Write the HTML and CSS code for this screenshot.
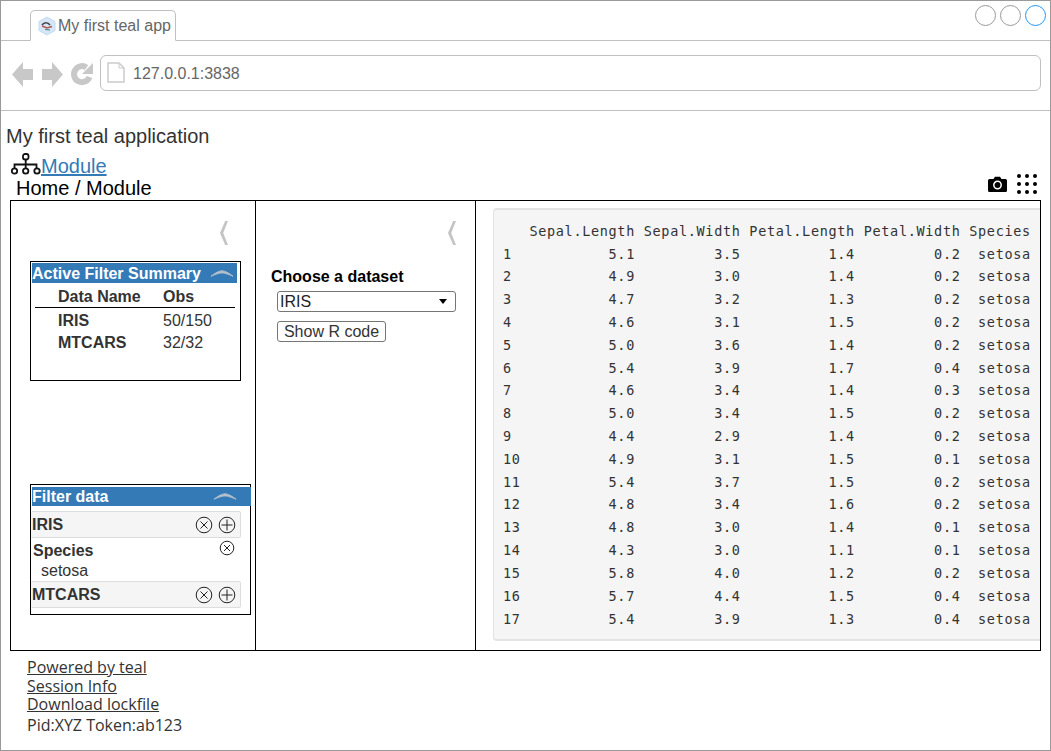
FILE: index.html
```html
<!DOCTYPE html>
<html>
<head>
  <title>My first teal app</title>
  <link rel="stylesheet" href="styles.css">
</head>
<body>
  <div class="window">
    <div class="tabstrip">
      <div class="tab">
        <svg class="favicon" width="18" height="20" viewBox="0 0 18 20">
          <polygon points="9,1 17,5.5 17,14.5 9,19 1,14.5 1,5.5" fill="#d6e6f7" stroke="#c3daf2"/>
          <path d="M4 9c2-3 6-3 8 0" fill="none" stroke="#444" stroke-width="1.6"/>
          <path d="M4 10l5 2 5-1.5" fill="none" stroke="#b5544c" stroke-width="1.4"/>
          <path d="M7 13.5l5 .5" fill="none" stroke="#2f8f7f" stroke-width="1.2"/>
        </svg>
        <span>My first teal app</span>
      </div>
      <div class="window-btns">
        <span class="circle"></span>
        <span class="circle"></span>
        <span class="circle active"></span>
      </div>
    </div>

    <div class="navbar">
      <svg class="nav-icons" width="85" height="30" viewBox="0 0 85 30">
        <path d="M2 16.5L13 4v7h10v11H13v7z" fill="#c8c8c8"/>
        <path d="M53 16.5L42 4v7H32v11h10v7z" fill="#c8c8c8"/>
        <path d="M79.500 19A8 8 0 1 1 76.500 9.500" fill="none" stroke="#c8c8c8" stroke-width="6"/>
        <path d="M83 5v11H72z" fill="#c8c8c8"/>
      </svg>
      <div class="address">
        <svg width="18" height="21" viewBox="0 0 18 21">
          <path d="M1 1h11l5 5v14H1z" fill="#fff" stroke="#ccc" stroke-width="1.5"/>
          <path d="M12 1v5h5" fill="none" stroke="#ccc"/>
        </svg>
        <span class="url">127.0.0.1:3838</span>
      </div>
    </div>

    <div class="app-title">My first teal application</div>
    <div class="module-tab">
      <svg width="30" height="22" viewBox="0 0 30 22">
        <g fill="none" stroke="#111" stroke-width="1.8">
          <rect x="12" y="1" width="5.5" height="5.5" rx="2"/>
          <path d="M14.700 6.500v5M3.500 15v-3.500h22V15M14.700 11.500V15"/>
          <circle cx="3.500" cy="18" r="2.700"/>
          <circle cx="14.700" cy="18" r="2.700"/>
          <circle cx="26" cy="18" r="2.700"/>
        </g>
      </svg>
      <a href="#">Module</a>
    </div>

    <div class="crumbs">
      <span>Home / Module</span>
      <div class="crumb-tools">
        <svg width="19" height="16" viewBox="0 0 19 16">
          <path d="M1.500 3H5.500L7 .7h5L13.500 3h4A1.500 1.500 0 0 1 19 4.500v10a1.500 1.500 0 0 1-1.500 1.500h-16A1.500 1.500 0 0 1 0 14.500v-10A1.500 1.500 0 0 1 1.500 3z" fill="#000"/>
          <circle cx="9.500" cy="9" r="3.700" fill="none" stroke="#fff" stroke-width="1.5"/>
        </svg>
        <div class="dots">
          <i></i><i></i><i></i><i></i><i></i><i></i><i></i><i></i><i></i>
        </div>
      </div>
    </div>

    <div class="main">
      <div class="left-col">
        <div class="chevron-row"><span class="chevron"></span></div>

        <div class="summary">
          <div class="blue-head">
            <span>Active Filter Summary</span>
            <svg width="24" height="9" viewBox="0 0 26 9"><path d="M1 7.500C8 2 12 1.500 13 1.500s5 .5 12 6C18 4.500 15 4 13 4S8 4.500 1 7.500z" fill="#b4c0cc" stroke="#b4c0cc"/></svg>
          </div>
          <table class="summary-table">
            <thead>
              <tr><th>Data Name</th><th>Obs</th></tr>
            </thead>
            <tbody>
              <tr><td class="name">IRIS</td><td>50/150</td></tr>
              <tr><td class="name">MTCARS</td><td>32/32</td></tr>
            </tbody>
          </table>
        </div>

        <div class="filters">
          <div class="blue-head">
            <span>Filter data</span>
            <svg width="24" height="9" viewBox="0 0 26 9"><path d="M1 7.500C8 2 12 1.500 13 1.500s5 .5 12 6C18 4.500 15 4 13 4S8 4.500 1 7.500z" fill="#b4c0cc" stroke="#b4c0cc"/></svg>
          </div>
          <div class="data-row first">
            <b>IRIS</b>
            <div class="row-icons">
              <svg width="18" height="18" viewBox="0 0 18 18"><circle cx="9" cy="9" r="7.8"/><path d="M5.500 5.500l7 7M12.500 5.500l-7 7"/></svg>
              <svg width="18" height="18" viewBox="0 0 18 18"><circle cx="9" cy="9" r="7.8"/><path d="M9 3.500v11M3.500 9h11"/></svg>
            </div>
          </div>
          <div class="species">
            <div class="species-head">
              <b>Species</b>
              <svg width="16" height="16" viewBox="0 0 16 16"><circle cx="8" cy="8" r="6.8"/><path d="M5 5l6 6M11 5l-6 6"/></svg>
            </div>
            <div class="species-val">setosa</div>
          </div>
          <div class="data-row">
            <b>MTCARS</b>
            <div class="row-icons">
              <svg width="18" height="18" viewBox="0 0 18 18"><circle cx="9" cy="9" r="7.8"/><path d="M5.500 5.500l7 7M12.500 5.500l-7 7"/></svg>
              <svg width="18" height="18" viewBox="0 0 18 18"><circle cx="9" cy="9" r="7.8"/><path d="M9 3.500v11M3.500 9h11"/></svg>
            </div>
          </div>
        </div>
      </div>

      <div class="mid-col">
        <div class="chevron-row"><span class="chevron"></span></div>
        <div class="choose">Choose a dataset</div>
        <div class="fake-select">
          <span>IRIS</span>
          <span class="caret"></span>
        </div>
        <button class="code-btn">Show R code</button>
      </div>

      <div class="right-col">
<pre class="output">   Sepal.Length Sepal.Width Petal.Length Petal.Width Species
1           5.1         3.5          1.4         0.2  setosa
2           4.9         3.0          1.4         0.2  setosa
3           4.7         3.2          1.3         0.2  setosa
4           4.6         3.1          1.5         0.2  setosa
5           5.0         3.6          1.4         0.2  setosa
6           5.4         3.9          1.7         0.4  setosa
7           4.6         3.4          1.4         0.3  setosa
8           5.0         3.4          1.5         0.2  setosa
9           4.4         2.9          1.4         0.2  setosa
10          4.9         3.1          1.5         0.1  setosa
11          5.4         3.7          1.5         0.2  setosa
12          4.8         3.4          1.6         0.2  setosa
13          4.8         3.0          1.4         0.1  setosa
14          4.3         3.0          1.1         0.1  setosa
15          5.8         4.0          1.2         0.2  setosa
16          5.7         4.4          1.5         0.4  setosa
17          5.4         3.9          1.3         0.4  setosa</pre>
      </div>
    </div>

    <div class="footer">
      <a href="#">Powered by teal</a>
      <a href="#">Session Info</a>
      <a href="#">Download lockfile</a>
      <div class="pid">Pid:XYZ Token:ab123</div>
    </div>
  </div>
</body>
</html>
```

FILE: styles.css
```css
* {
  box-sizing: border-box;
}

body {
  margin: 0;
  font-family: "Liberation Sans", Arial, sans-serif;
  color: #333;
  background-color: #fff;
}

.window {
  width: 1051px;
  height: 751px;
  border: 1px solid #999;
  overflow: hidden;
}

.tabstrip {
  display: flex;
  justify-content: space-between;
  height: 40px;
  padding: 9px 4px 0 29px;
  border-bottom: 1px solid #c0c0c0;
}

.tab {
  display: flex;
  align-items: center;
  gap: 2px;
  width: 146px;
  height: 31px;
  padding: 0 0 0 7px;
  border: 1px solid #c0c0c0;
  border-bottom: 1px solid #fff;
  border-radius: 5px 5px 0 0;
  background-color: #fff;
  color: #666;
  font-size: 16px;
  white-space: nowrap;
}

.window-btns {
  display: flex;
  gap: 4px;
  margin-top: -5px;
}

.circle {
  width: 21px;
  height: 21px;
  border: 1px solid #999;
  border-radius: 50%;
}

.circle.active {
  border-color: #2196f3;
}

.navbar {
  display: flex;
  align-items: center;
  gap: 5px;
  height: 70px;
  padding: 0 9px 6px 9px;
  border-bottom: 1px solid #c0c0c0;
}

.address {
  display: flex;
  align-items: center;
  gap: 8px;
  flex: 1;
  height: 36px;
  padding-left: 6px;
  border: 1px solid #c0c0c0;
  border-radius: 6px;
  color: #666;
  font-size: 16px;
}

.url {
  margin-top: 2px;
}

.app-title {
  margin: 14px 0 0 5px;
  font-size: 20px;
  line-height: 23px;
}

.module-tab {
  display: flex;
  align-items: center;
  height: 24px;
  margin: 6px 0 0 10px;
  font-size: 20px;
}

.module-tab svg {
  margin-top: -4px;
}

.module-tab a {
  color: #337ab7;
}

.crumbs {
  display: flex;
  justify-content: space-between;
  align-items: center;
  height: 24px;
  margin: -2px 13px 0 15px;
  color: #000;
  font-size: 20px;
}

.crumb-tools {
  display: flex;
  align-items: center;
  gap: 10px;
  margin-top: -8px;
}

.dots {
  display: grid;
  grid-template-columns: repeat(3, 4px);
  gap: 4px;
}

.dots i {
  width: 4px;
  height: 4px;
  border-radius: 50%;
  background-color: #000;
}

.main {
  display: flex;
  width: 1031px;
  height: 451px;
  margin: 0 0 0 9px;
  border: 1px solid #000;
  overflow: hidden;
}

.left-col {
  width: 245px;
  padding: 20px 0 0 19px;
  border-right: 1px solid #000;
}

.mid-col {
  width: 220px;
  padding: 20px 0 0 15px;
  border-right: 1px solid #000;
}

.right-col {
  flex: 1;
  padding: 7px 0 0 17px;
  overflow: hidden;
}

.chevron-row {
  display: flex;
  justify-content: flex-end;
  height: 26px;
  padding-right: 27px;
}

.mid-col .chevron-row {
  padding-right: 19px;
}

.chevron {
  width: 8px;
  height: 24px;
  background-color: #c4c4c4;
  clip-path: polygon(65% 0, 100% 0, 40% 50%, 100% 100%, 65% 100%, 0 50%);
}

.summary {
  width: 211px;
  height: 120px;
  margin-top: 14px;
  padding: 1px 3px 1px 1px;
  border: 1px solid #000;
}

.blue-head {
  display: flex;
  justify-content: space-between;
  align-items: center;
  height: 20px;
  padding-left: 0;
  padding-right: 3px;
  padding-top: 1px;
  background-color: #337ab7;
  color: #fff;
  font-size: 16px;
  font-weight: bold;
}

.summary-table {
  width: 200px;
  margin: 4px 0 0 3px;
  border-collapse: collapse;
  font-size: 16px;
}

.summary-table th,
.summary-table td {
  padding: 0;
  text-align: left;
}

.summary-table th:first-child,
.summary-table td:first-child {
  width: 128px;
  padding-left: 23px;
}

.summary-table th {
  height: 20px;
  border-bottom: 1px solid #000;
}

.summary-table td {
  vertical-align: bottom;
}

.summary-table tbody tr {
  height: 22px;
}

.summary-table tbody tr:first-child {
  height: 23px;
}

.name {
  font-weight: bold;
}

.filters {
  width: 221px;
  height: 131px;
  margin-top: 103px;
  padding-top: 2px;
  border: 1px solid #000;
}

.filters .blue-head {
  height: 19px;
  margin-left: 1px;
  margin-right: -1px;
  padding-right: 14px;
  padding-top: 0;
}

.data-row {
  display: flex;
  justify-content: space-between;
  align-items: center;
  width: 210px;
  height: 27px;
  padding: 1px 4px 0 1px;
  border: 1px solid #ddd;
  border-left: 0;
  border-radius: 2px;
  background-color: #f5f5f5;
  font-size: 16px;
}

.data-row.first {
  margin-top: 5px;
}

.row-icons {
  display: flex;
  gap: 5px;
}

.row-icons svg,
.species-head svg {
  fill: none;
  stroke: #222;
  stroke-width: 1;
}

.species {
  height: 43px;
  padding: 4px 0 0 2px;
  font-size: 16px;
}

.species-head {
  display: flex;
  justify-content: space-between;
  align-items: flex-start;
  padding-right: 15px;
}

.species-head svg {
  margin-top: -2px;
}

.species-val {
  margin: 2px 0 0 8px;
}

.choose {
  margin-top: 21px;
  color: #000;
  font-size: 16px;
  font-weight: bold;
}

.fake-select {
  display: flex;
  justify-content: space-between;
  align-items: center;
  width: 179px;
  height: 21px;
  margin: 5px 0 0 6px;
  padding: 0 8px 0 2px;
  border: 1px solid #767676;
  border-radius: 3px;
  color: #222;
  font-size: 16px;
}

.caret {
  border-top: 5px solid #000;
  border-left: 4px solid transparent;
  border-right: 4px solid transparent;
}

.code-btn {
  display: block;
  width: 109px;
  height: 21px;
  margin: 9px 0 0 6px;
  padding: 0;
  border: 1px solid #767676;
  border-radius: 3px;
  background-color: #fff;
  color: #333;
  font-family: "Liberation Sans", Arial, sans-serif;
  font-size: 16px;
}

.output {
  width: 570px;
  height: 433px;
  margin: 0;
  padding: 9.7px 10px 0 9px;
  border: 1px solid #e3e3e3;
  border-bottom-width: 2px;
  border-top-width: 2px;
  border-radius: 4px;
  background-color: #f5f5f5;
  color: #333;
  font-family: "DejaVu Sans Mono", monospace;
  font-size: 13.5px;
  letter-spacing: 0.67px;
  line-height: 22.82px;
}

.footer {
  margin: 7px 0 0 26px;
  color: #333;
  font-family: "Open Sans", sans-serif;
  font-size: 16px;
  line-height: 18.5px;
}

.footer a {
  display: block;
  color: #333;
}

.pid {
  margin-top: 2px;
}
```
